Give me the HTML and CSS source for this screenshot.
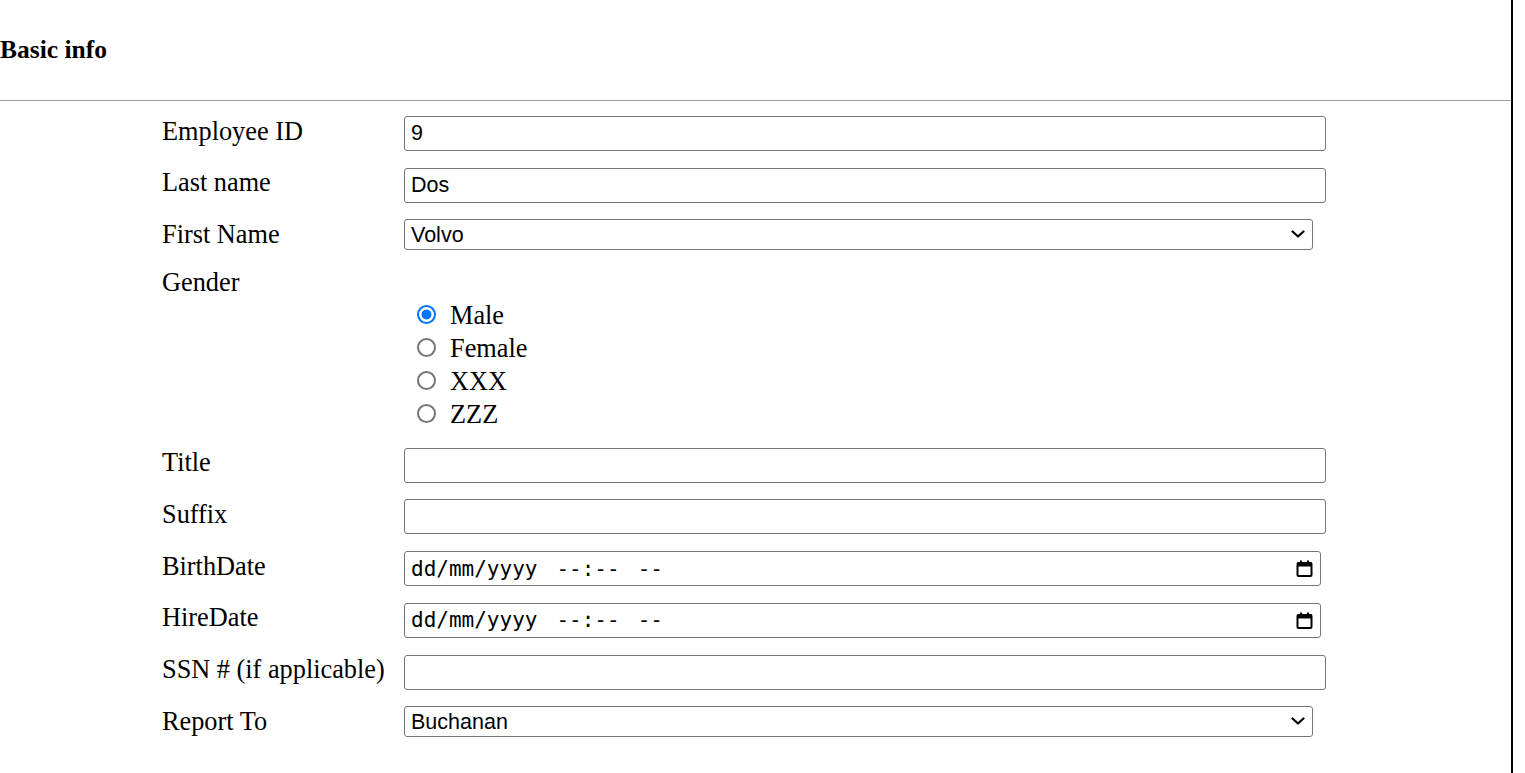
FILE: index.html
```html
<!DOCTYPE html>
<html lang="en">
<head>
<meta charset="utf-8">
<title>Basic info</title>
<link rel="stylesheet" href="styles.css">
</head>
<body>
<div class="page">
  <div class="header">
    <h3 class="title">Basic info</h3>
  </div>
  <form class="form">
    <div class="row">
      <label class="label">Employee ID</label>
      <input class="text-input" type="text" value="9">
    </div>
    <div class="row">
      <label class="label">Last name</label>
      <input class="text-input" type="text" value="Dos">
    </div>
    <div class="row">
      <label class="label">First Name</label>
      <div class="select-wrap">
        <select class="select"><option>Volvo</option><option>Saab</option></select>
        <svg class="chevron" width="14" height="8" viewBox="0 0 14 8"><polyline points="1.5,1.5 7,6.5 12.5,1.5" fill="none" stroke="#000" stroke-width="2.2" stroke-linecap="round" stroke-linejoin="round"/></svg>
      </div>
    </div>
    <div class="row">
      <label class="label">Gender</label>
      <div class="radios">
        <label class="option"><input class="radio" type="radio" name="gender" checked>Male</label>
        <label class="option"><input class="radio" type="radio" name="gender">Female</label>
        <label class="option"><input class="radio" type="radio" name="gender">XXX</label>
        <label class="option"><input class="radio" type="radio" name="gender">ZZZ</label>
      </div>
    </div>
    <div class="row">
      <label class="label">Title</label>
      <input class="text-input" type="text">
    </div>
    <div class="row">
      <label class="label">Suffix</label>
      <input class="text-input" type="text">
    </div>
    <div class="row">
      <label class="label">BirthDate</label>
      <div class="date-input">
        <span>dd/mm/yyyy</span><span class="t-part">--:--</span><span class="ap-part">--</span>
        <svg class="cal" width="17" height="17" viewBox="0 0 17 17"><rect x="1.5" y="3" width="14" height="13" rx="1" fill="none" stroke="#000" stroke-width="2"/><rect x="1" y="2.5" width="15" height="4" fill="#000"/><rect x="4" y="0.5" width="2" height="3" fill="#000"/><rect x="11" y="0.5" width="2" height="3" fill="#000"/></svg>
      </div>
    </div>
    <div class="row">
      <label class="label">HireDate</label>
      <div class="date-input">
        <span>dd/mm/yyyy</span><span class="t-part">--:--</span><span class="ap-part">--</span>
        <svg class="cal" width="17" height="17" viewBox="0 0 17 17"><rect x="1.5" y="3" width="14" height="13" rx="1" fill="none" stroke="#000" stroke-width="2"/><rect x="1" y="2.5" width="15" height="4" fill="#000"/><rect x="4" y="0.5" width="2" height="3" fill="#000"/><rect x="11" y="0.5" width="2" height="3" fill="#000"/></svg>
      </div>
    </div>
    <div class="row">
      <label class="label">SSN # (if applicable)</label>
      <input class="text-input" type="text">
    </div>
    <div class="row">
      <label class="label">Report To</label>
      <div class="select-wrap">
        <select class="select"><option>Buchanan</option><option>Fuller</option></select>
        <svg class="chevron" width="14" height="8" viewBox="0 0 14 8"><polyline points="1.5,1.5 7,6.5 12.5,1.5" fill="none" stroke="#000" stroke-width="2.2" stroke-linecap="round" stroke-linejoin="round"/></svg>
      </div>
    </div>
  </form>
</div>
</body>
</html>
```
FILE: styles.css
```css
* { box-sizing: border-box; }

html, body {
  margin: 0;
  padding: 0;
  background: #fff;
}

body {
  font-family: "Liberation Serif", "Times New Roman", serif;
  color: #000;
}

.page {
  width: 1513px;
  min-height: 773px;
  border-right: 2px solid #000;
}

.header {
  height: 101px;
  border-bottom: 1px solid #a0a0a0;
}

.title {
  margin: 0;
  font-size: 25.5px;
  font-weight: bold;
  line-height: 100px;
}

.form {
  display: flex;
  flex-direction: column;
  gap: 16.7px;
  padding: 15px 0 20px 162px;
  margin: 0;
}

.row {
  display: flex;
  align-items: flex-start;
}

.label {
  flex: none;
  width: 242px;
  font-size: 26.3px;
  line-height: 29px;
  padding-top: 0.5px;
}

.text-input {
  width: 922px;
  height: 35px;
  margin: 0;
  border: 1px solid #767676;
  border-radius: 3px;
  padding: 0 6px;
  font-family: "Liberation Sans", Arial, sans-serif;
  font-size: 21.5px;
  color: #000;
  background: #fff;
  outline: none;
}

.select-wrap {
  position: relative;
  width: 909px;
  height: 31px;
}

.select {
  width: 100%;
  height: 31px;
  margin: 0;
  appearance: none;
  -webkit-appearance: none;
  border: 1px solid #767676;
  border-radius: 3px;
  padding: 0 6px;
  font-family: "Liberation Sans", Arial, sans-serif;
  font-size: 21.5px;
  color: #000;
  background: #fff;
}

.chevron {
  position: absolute;
  right: 8px;
  top: 11px;
  pointer-events: none;
}

.radios {
  display: flex;
  flex-direction: column;
  margin-top: 31px;
  margin-bottom: 1px;
  padding-left: 13px;
}

.option {
  display: flex;
  align-items: center;
  height: 33px;
  font-size: 26.3px;
  line-height: 29px;
  padding-top: 1px;
}

.radio {
  appearance: none;
  -webkit-appearance: none;
  flex: none;
  width: 19px;
  height: 19px;
  margin: 0 14px 2px 0;
  border: 2px solid #767676;
  border-radius: 50%;
  background: #fff;
}

.radio:checked {
  border: 2px solid #0075ff;
  background: radial-gradient(circle, #0075ff 0, #0075ff 4.6px, #fff 5.3px);
}

.date-input {
  width: 917px;
  height: 35px;
  display: flex;
  align-items: center;
  border: 1px solid #767676;
  border-radius: 3px;
  padding: 0 7px 0 6px;
  font-family: "DejaVu Sans Mono", "Liberation Mono", monospace;
  font-size: 21px;
  color: #000;
  white-space: pre;
}

.t-part { margin-left: 19px; }
.ap-part { margin-left: 18px; }

.cal {
  margin-left: auto;
  flex: none;
}
```
